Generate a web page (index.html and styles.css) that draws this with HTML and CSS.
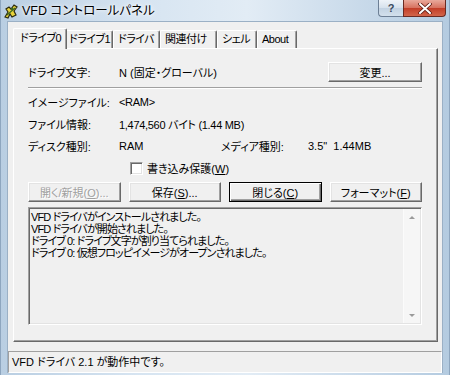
FILE: index.html
```html
<!DOCTYPE html>
<html lang="ja">
<head>
    <meta charset="UTF-8">
    <title>VFD コントロールパネル</title>
    <link rel="stylesheet" href="styles.css">
</head>
<body>
    <div class="window">
        <div class="titlebar">
            <svg class="app-icon" width="16" height="16" viewBox="0 0 16 16">
                <path d="M2 14 L5 9 L3 6 L6 4 L8 6 L11 2 L14 4 L11 8 L13 12 L9 14 L7 11 L5 15 Z" fill="#e8d23a" stroke="#2b2b10" stroke-width="1.2"/>
                <circle cx="9" cy="6" r="1.3" fill="#3d6a1f"/>
                <path d="M4 12 L12 5" stroke="#3d6a1f" stroke-width="1.2"/>
            </svg>
            <span class="title">VFD コントロールパネル</span>
            <div class="caption-buttons">
                <div class="cap-btn help">?</div>
                <div class="cap-btn close">
                    <svg width="14" height="11" viewBox="0 0 14 11">
                        <path d="M2 1 L12 10 M12 1 L2 10" stroke="#5a1a12" stroke-width="3.6" stroke-linecap="round"/>
                        <path d="M2 1 L12 10 M12 1 L2 10" stroke="#fff" stroke-width="2" stroke-linecap="round"/>
                    </svg>
                </div>
            </div>
        </div>

        <div class="client">
            <div class="tabs">
                <div class="tab active">ドライブ0</div>
                <div class="tab">ドライブ1</div>
                <div class="tab">ドライバ</div>
                <div class="tab">関連付け</div>
                <div class="tab">シェル</div>
                <div class="tab">About</div>
            </div>

            <div class="panel">
                <div class="row first">
                    <span class="label">ドライブ文字:</span>
                    <span>N (固定・グローバル)</span>
                    <button class="btn change">変更...</button>
                </div>
                <div class="separator"></div>

                <div class="info">
                    <span>イメージファイル:</span>
                    <span class="wide">&lt;RAM&gt;</span>
                    <span>ファイル情報:</span>
                    <span class="wide">1,474,560 バイト (1.44 MB)</span>
                    <span>ディスク種別:</span>
                    <span>RAM</span>
                    <span>メディア種別:</span>
                    <span>3.5"&nbsp;&nbsp;1.44MB</span>
                </div>

                <div class="check-row">
                    <span class="checkbox"></span>
                    <span>書き込み保護(<u>W</u>)</span>
                </div>

                <div class="buttons">
                    <button class="btn" disabled>開く/新規(<u>O</u>)...</button>
                    <button class="btn">保存(<u>S</u>)...</button>
                    <button class="btn default">閉じる(<u>C</u>)</button>
                    <button class="btn">フォーマット(<u>F</u>)</button>
                </div>

                <div class="log">
                    <div class="log-text">
                        <div>VFD ドライバがインストールされました。</div>
                        <div>VFD ドライバが開始されました。</div>
                        <div>ドライブ 0: ドライブ文字が割り当てられました。</div>
                        <div>ドライブ 0: 仮想フロッピイメージがオープンされました。</div>
                    </div>
                    <div class="scrollbar">
                        <span class="arrow up"></span>
                        <span class="arrow down"></span>
                    </div>
                </div>
            </div>

            <div class="statusbar">VFD ドライバ 2.1 が動作中です。</div>
        </div>
    </div>
</body>
</html>
```

FILE: styles.css
```css
* {
    box-sizing: border-box;
}
body {
    margin: 0;
    width: 450px;
    height: 375px;
    overflow: hidden;
    font-family: 'Liberation Sans', 'Noto Sans CJK JP', sans-serif;
    font-size: 11px;
    font-feature-settings: "palt";
    color: #000;
}
.window {
    display: flex;
    flex-direction: column;
    width: 450px;
    height: 375px;
    padding: 0 6px 2px 6px;
    background: linear-gradient(to right, #b9cee2, #d6e4f1 30%, #e2ecf5 55%, #c9daea 80%, #b4cbe0);
    border-left: 1px solid #8ea6bf;
    border-right: 1px solid #8ea6bf;
}
.titlebar {
    display: flex;
    align-items: flex-start;
    height: 21px;
    margin: 0 -2px;
}
.app-icon {
    margin: 3px 3px 0 -2px;
}
.title {
    margin-top: 3px;
    font-size: 12.5px;
    line-height: 16px;
    text-shadow: 0 0 6px #fff, 0 0 3px #fff;
}
.caption-buttons {
    display: flex;
    margin-left: auto;
    margin-right: -1px;
}
.cap-btn {
    height: 17px;
    display: flex;
    justify-content: center;
    align-items: center;
    border: 1px solid #6d7f95;
    border-top: none;
}
.help {
    width: 25px;
    border-radius: 0 0 0 4px;
    border-right: none;
    background: linear-gradient(#eef3f8, #d6e1ec 50%, #c2d2e2 51%, #d3e0ec);
    color: #3a4a5e;
    font-weight: bold;
    font-size: 11px;
}
.close {
    width: 43px;
    border-color: #6a2a22;
    border-radius: 0 0 4px 0;
    background: linear-gradient(#e9a99b, #d6705d 50%, #c23d27 51%, #d2654a);
}
.client {
    flex: 1;
    display: flex;
    flex-direction: column;
    background: #f0f0f0;
    border: 1px solid #9bb0c5;
    border-bottom: none;
}
.tabs {
    display: flex;
    align-items: flex-end;
    height: 27px;
    padding-left: 7px;
    position: relative;
    z-index: 1;
    letter-spacing: -0.5px;
}
.tab {
    height: 18px;
    padding-left: 4px;
    line-height: 16px;
    white-space: nowrap;
    background: #f0f0f0;
    border-top: 1px solid #fff;
    border-left: 1px solid #fff;
    border-right: 1px solid #696969;
    border-radius: 2px 2px 0 0;
    box-shadow: inset -1px 0 0 #a0a0a0;
    margin-bottom: 1px;
}
.tab:nth-child(2) { width: 48px; }
.tab:nth-child(3) { width: 47px; }
.tab:nth-child(4) { width: 57px; }
.tab:nth-child(5) { width: 40px; }
.tab:nth-child(6) { width: 40px; }
.tab.active {
    position: relative;
    z-index: 1;
    width: 54px;
    height: 21px;
    margin: 0 -2px 0 -2px;
    padding-left: 6px;
    line-height: 19px;
}
.tab.active + .tab {
    border-left: none;
}
.panel {
    height: 294px;
    margin: -1px 4px 0 5px;
    padding: 13px 15px 0 14px;
    border-top: 1px solid #fff;
    border-left: 1px solid #fff;
    border-right: 1px solid #696969;
    border-bottom: 1px solid #696969;
    box-shadow: inset -1px -1px 0 #a0a0a0;
    display: flex;
    flex-direction: column;
}
.row {
    display: flex;
    align-items: center;
    height: 20px;
}
.label {
    width: 91px;
}
.btn {
    height: 20px;
    padding: 0;
    font: inherit;
    color: #000;
    background: #f0f0f0;
    border-top: 1px solid #fff;
    border-left: 1px solid #fff;
    border-right: 1px solid #696969;
    border-bottom: 1px solid #696969;
    box-shadow: inset -1px -1px 0 #a0a0a0, inset 1px 1px 0 #e3e3e3;
}
.btn:disabled {
    color: #a0a0a0;
    text-shadow: 1px 1px 0 #fff;
}
.btn.default {
    border: 1px solid #000;
    box-shadow: inset 1px 1px 0 #fff, inset -1px -1px 0 #696969, inset -2px -2px 0 #a0a0a0;
}
.change {
    width: 94px;
    margin-left: auto;
}
.separator {
    margin-top: 5px;
    border-top: 1px solid #a0a0a0;
    border-bottom: 1px solid #fff;
}
.info {
    display: grid;
    grid-template-columns: 91px 102px 87px auto;
    grid-auto-rows: 22px;
    align-items: center;
    margin-top: 2px;
}
.info .wide {
    grid-column: span 3;
    letter-spacing: -0.3px;
}
.check-row {
    display: flex;
    align-items: center;
    height: 22px;
    padding-left: 102px;
}
.checkbox {
    width: 13px;
    height: 13px;
    margin-right: 4px;
    background: #fff;
    border-top: 1px solid #a0a0a0;
    border-left: 1px solid #a0a0a0;
    border-right: 1px solid #fff;
    border-bottom: 1px solid #fff;
    box-shadow: inset 1px 1px 0 #696969, inset -1px -1px 0 #e3e3e3;
}
.buttons {
    display: grid;
    grid-template-columns: repeat(4, 1fr);
    gap: 8px;
    margin-top: 3px;
}
.log {
    display: flex;
    height: 118px;
    margin-top: 5px;
    border-top: 1px solid #a0a0a0;
    border-left: 1px solid #a0a0a0;
    border-right: 1px solid #fff;
    border-bottom: 1px solid #fff;
    box-shadow: inset 1px 1px 0 #696969, inset -1px -1px 0 #e3e3e3;
}
.log-text {
    flex: 1;
    padding: 3px 0 0 2px;
    line-height: 12px;
    letter-spacing: -0.9px;
}
.scrollbar {
    width: 17px;
    margin: 1px 1px 1px 0;
    background: #f6f6f6;
    border-left: 1px solid #fbfbfb;
    display: flex;
    flex-direction: column;
    justify-content: space-between;
    align-items: center;
    padding: 7px 0 6px;
}
.arrow {
    width: 0;
    height: 0;
    border-left: 3px solid transparent;
    border-right: 3px solid transparent;
}
.arrow.up {
    border-bottom: 3px solid #9a9a9a;
}
.arrow.down {
    border-top: 3px solid #9a9a9a;
}
.statusbar {
    height: 22px;
    margin-top: 9px;
    padding-left: 3px;
    line-height: 20px;
    border-top: 1px solid #a0a0a0;
    border-left: 1px solid #a0a0a0;
    border-right: 1px solid #fff;
    border-bottom: 1px solid #fff;
}
```
